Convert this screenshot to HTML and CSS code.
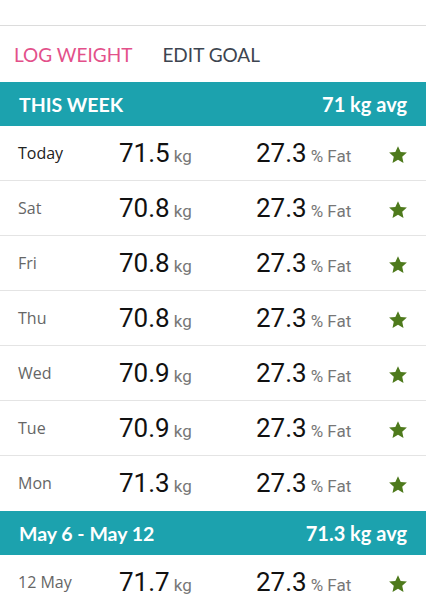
FILE: index.html
```html
<!DOCTYPE html>
<html>
<head>
<meta charset="utf-8">
<link rel="stylesheet" href="styles.css">
</head>
<body>
<div class="topbar"></div>
<div class="tabs">
  <span class="tab active">LOG WEIGHT</span>
  <span class="tab">EDIT GOAL</span>
</div>
<div class="week">THIS WEEK<span>71 kg avg</span></div>
<div class="row"><span class="day today">Today</span><span class="w">71.5<small>kg</small></span><span class="f">27.3<small>% Fat</small></span><svg class="star" viewBox="0 0 24 24"><path d="M12 2.5l2.9 6.2 6.8.7-5.1 4.6 1.4 6.7L12 17.3l-6 3.4 1.4-6.7-5.1-4.6 6.8-.7z"/></svg></div>
<div class="row"><span class="day">Sat</span><span class="w">70.8<small>kg</small></span><span class="f">27.3<small>% Fat</small></span><svg class="star" viewBox="0 0 24 24"><path d="M12 2.5l2.9 6.2 6.8.7-5.1 4.6 1.4 6.7L12 17.3l-6 3.4 1.4-6.7-5.1-4.6 6.8-.7z"/></svg></div>
<div class="row"><span class="day">Fri</span><span class="w">70.8<small>kg</small></span><span class="f">27.3<small>% Fat</small></span><svg class="star" viewBox="0 0 24 24"><path d="M12 2.5l2.9 6.2 6.8.7-5.1 4.6 1.4 6.7L12 17.3l-6 3.4 1.4-6.7-5.1-4.6 6.8-.7z"/></svg></div>
<div class="row"><span class="day">Thu</span><span class="w">70.8<small>kg</small></span><span class="f">27.3<small>% Fat</small></span><svg class="star" viewBox="0 0 24 24"><path d="M12 2.5l2.9 6.2 6.8.7-5.1 4.6 1.4 6.7L12 17.3l-6 3.4 1.4-6.7-5.1-4.6 6.8-.7z"/></svg></div>
<div class="row"><span class="day">Wed</span><span class="w">70.9<small>kg</small></span><span class="f">27.3<small>% Fat</small></span><svg class="star" viewBox="0 0 24 24"><path d="M12 2.5l2.9 6.2 6.8.7-5.1 4.6 1.4 6.7L12 17.3l-6 3.4 1.4-6.7-5.1-4.6 6.8-.7z"/></svg></div>
<div class="row"><span class="day">Tue</span><span class="w">70.9<small>kg</small></span><span class="f">27.3<small>% Fat</small></span><svg class="star" viewBox="0 0 24 24"><path d="M12 2.5l2.9 6.2 6.8.7-5.1 4.6 1.4 6.7L12 17.3l-6 3.4 1.4-6.7-5.1-4.6 6.8-.7z"/></svg></div>
<div class="row last"><span class="day">Mon</span><span class="w">71.3<small>kg</small></span><span class="f">27.3<small>% Fat</small></span><svg class="star" viewBox="0 0 24 24"><path d="M12 2.5l2.9 6.2 6.8.7-5.1 4.6 1.4 6.7L12 17.3l-6 3.4 1.4-6.7-5.1-4.6 6.8-.7z"/></svg></div>
<div class="week">May 6 - May 12<span>71.3 kg avg</span></div>
<div class="row"><span class="day">12 May</span><span class="w">71.7<small>kg</small></span><span class="f">27.3<small>% Fat</small></span><svg class="star" viewBox="0 0 24 24"><path d="M12 2.5l2.9 6.2 6.8.7-5.1 4.6 1.4 6.7L12 17.3l-6 3.4 1.4-6.7-5.1-4.6 6.8-.7z"/></svg></div>
</body>
</html>
```
FILE: styles.css
```css
html, body { margin: 0; padding: 0; background: #fff; }
body { width: 426px; overflow: hidden; font-family: Roboto, "Liberation Sans", sans-serif; }
.topbar { height: 25px; border-bottom: 1px solid #dcdcdc; }
.tabs {
  height: 56px;
  display: flex;
  align-items: center;
  gap: 30px;
  padding-left: 14px;
  font-family: Lato, "Open Sans", sans-serif;
  font-size: 19px;
  color: #3d4550;
}
.tab.active { color: #e3508a; }
.week {
  height: 44px;
  background: #1ca2ae;
  color: #fff;
  display: flex;
  align-items: center;
  justify-content: space-between;
  padding: 0 19px 0 19px;
  font-family: Lato, "Open Sans", sans-serif;
  font-weight: 700;
  font-size: 19.5px;
}
.week span { font-size: 20px; }
.row {
  height: 54px;
  border-bottom: 1px solid #e4e4e4;
  display: grid;
  grid-template-columns: 101px 137px 1fr auto;
  align-items: baseline;
  padding: 0 18px 0 18px;
  line-height: 54px;
}
.row.last { border-bottom: none; height: 55px; }
.day { font-family: "Open Sans", sans-serif; font-size: 16px; color: #666; align-self: center; line-height: 20px; margin-top: -3px; }
.day.today { color: #222; }
.w, .f { font-size: 26px; color: #111; }
.w small, .f small { font-size: 17px; color: #777; margin-left: 4px; }
.star { width: 22px; height: 22px; fill: #4e7a1c; align-self: center; margin-right: -1px; }
```
